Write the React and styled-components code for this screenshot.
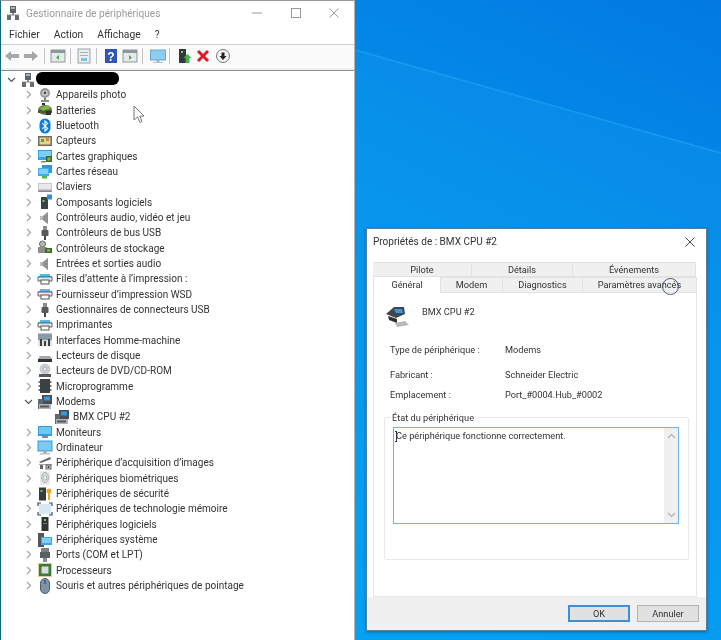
import React from "react";
import styled, { createGlobalStyle } from "styled-components";

const GlobalStyle = createGlobalStyle`
  html, body { margin: 0; padding: 0; background: #0a94ec; }
  body { font-family: Roboto, "Open Sans", sans-serif; overflow: hidden; }
`;

const Desktop = styled.div`
  position: relative;
  width: 721px;
  height: 640px;
  display: flex;
  align-items: flex-start;
  overflow: hidden;
  filter: blur(0.65px);
  background: linear-gradient(205deg, #0279e2 0%, #0490ea 35%, #029df2 70%, #04a3ef 100%);
`;

const Ray = styled.svg`
  position: absolute;
  left: 0;
  top: 0;
  width: 721px;
  height: 640px;
`;

const Manager = styled.section`
  position: relative;
  box-sizing: border-box;
  width: 355px;
  height: 640px;
  flex: none;
  background: #fff;
  border-left: 1px solid #15658a;
  border-right: 1px solid #b4b4b4;
  border-top: 1px solid #9a9a9a;
`;

const TitleBar = styled.div`
  display: flex;
  align-items: center;
  height: 24px;
  padding-left: 4px;
  color: #9b9b9b;
  font-size: 10.15px;
`;

const TitleText = styled.span`
  margin-left: 5px;
`;

const WindowButtons = styled.div`
  margin-left: auto;
  display: flex;
  align-items: center;
  gap: 28.5px;
  padding-right: 15px;
`;

const MenuBar = styled.nav`
  display: flex;
  gap: 14px;
  height: 19px;
  align-items: center;
  padding-left: 8px;
  color: #333;
  font-size: 10.3px;
  border-bottom: 1px solid #cfcfcf;
`;

const ToolBar = styled.div`
  display: flex;
  align-items: center;
  height: 21px;
  padding-left: 3px;
  background: #fafafa;
`;

const ToolIcon = styled.svg`
  width: 16px;
  height: 16px;
  margin-right: ${(p) => p.$gap || 0}px;
  flex: none;
`;

const ToolSep = styled.span`
  width: 1px;
  height: 16px;
  background: #c4c4c4;
  margin: 0 ${(p) => p.$right}px 0 ${(p) => p.$left}px;
  flex: none;
`;

const Divider = styled.div`
  height: 2px;
  margin-top: 2px;
  background: #eeeeee;
  border-bottom: 1px solid #8e8e8e;
`;

const Tree = styled.div`
  padding-top: 1px;
`;

const Row = styled.div`
  display: flex;
  align-items: center;
  height: 15.33px;
  padding-left: ${(p) => 3 + p.$level * 17}px;
  color: #333;
  font-size: 10.03px;
  white-space: nowrap;
`;

const Twist = styled.span`
  display: flex;
  align-items: center;
  justify-content: center;
  width: 14px;
  flex: none;
`;

const RowIcon = styled.svg`
  width: 16px;
  height: 16px;
  margin: 0 3px 0 2px;
  flex: none;
`;

const Redacted = styled.span`
  display: block;
  width: 83px;
  height: 13px;
  margin: -3px 0 0 -3px;
  background: #000;
  border-radius: 6px;
`;

const Pointer = styled.svg`
  position: absolute;
  left: 132px;
  top: 104px;
  width: 12px;
  height: 19px;
`;

const Dialog = styled.section`
  position: relative;
  box-sizing: border-box;
  flex: none;
  width: 341px;
  height: 403px;
  margin: 228px 0 0 11px;
  background: #fff;
  border: 1px solid #5f7f94;
  box-shadow: 0 1px 3px rgba(0, 40, 80, 0.45);
  display: flex;
  flex-direction: column;
  color: #333;
  font-size: 9.2px;
`;

const DialogTitle = styled.div`
  display: flex;
  align-items: center;
  justify-content: space-between;
  height: 25px;
  padding: 0 11px 0 6px;
  font-size: 10px;
  flex: none;
`;

const TabArea = styled.div`
  margin: 8px 9px 0 6px;
  flex: none;
`;

const TabRow = styled.div`
  display: flex;
  height: ${(p) => p.$h}px;
  align-items: flex-end;
`;

const Tab = styled.div`
  box-sizing: border-box;
  width: ${(p) => p.$w}px;
  height: ${(p) => (p.$active ? 17 : p.$back ? 15 : 16)}px;
  flex: none;
  display: flex;
  align-items: center;
  justify-content: center;
  background: ${(p) => (p.$active ? "#fff" : "#f0f0f0")};
  border: 1px solid #e2e2e2;
  border-bottom: ${(p) => (p.$active ? "none" : "1px solid #e2e2e2")};
  border-left: ${(p) => (p.$active ? "1px solid #e2e2e2" : "none")};
  padding-bottom: ${(p) => (p.$back ? 0 : 1)}px;
`;

const Panel = styled.div`
  box-sizing: border-box;
  margin: 0 9px 0 6px;
  height: 304px;
  flex: none;
  background: #fff;
  border: 1px solid #e6e6e6;
  border-top: none;
  padding: 11px 9px 0 10px;
`;

const Head = styled.div`
  display: flex;
  align-items: flex-start;
  gap: 11px;
  padding-left: 1px;
  height: 30px;
`;

const HeadName = styled.span`
  margin-top: 2px;
`;

const Info = styled.div`
  display: grid;
  grid-template-columns: 115px 1fr;
  margin: 9px 0 0 6px;
`;

const InfoCell = styled.span`
  height: ${(p) => p.$h}px;
  line-height: 14px;
`;

const Group = styled.fieldset`
  box-sizing: border-box;
  margin: 10px 0 0 0;
  width: 305px;
  height: 148px;
  padding: 0 9px 0 8px;
  border: 1px solid #e9e9e9;
  border-radius: 2px;
`;

const GroupLabel = styled.legend`
  padding: 0 1px;
  margin-left: -2px;
  font-size: 9.2px;
  line-height: 11px;
`;

const StatusBox = styled.div`
  position: relative;
  box-sizing: border-box;
  width: 286px;
  height: 97px;
  margin-top: 4px;
  border: 1px solid #6fb0e6;
  display: flex;
`;

const StatusText = styled.div`
  flex: 1;
  padding: 1px 0 0 2px;
  line-height: 14px;
`;

const Caret = styled.span`
  position: absolute;
  left: 1px;
  top: 3px;
  width: 2px;
  height: 9px;
  border: solid #334;
  border-width: 1px 0;
  background: linear-gradient(#334, #334) center / 1px 100% no-repeat;
`;

const ScrollTrack = styled.div`
  width: 14px;
  flex: none;
  background: #f0f0f0;
  display: flex;
  flex-direction: column;
  align-items: center;
  justify-content: space-between;
  padding: 5px 0;
`;

const Footer = styled.div`
  flex: 1;
  display: flex;
  justify-content: flex-end;
  align-items: flex-start;
  gap: 7px;
  padding: 8px 7px 0 0;
  background: #f0f0f0;
`;

const Btn = styled.button`
  box-sizing: border-box;
  width: 62px;
  height: 17px;
  padding: 0;
  font: inherit;
  color: #333;
  background: #e1e1e1;
  border: ${(p) => (p.$primary ? "2px solid #3e8fd8" : "1px solid #b4b4b4")};
`;

const TabCursor = styled.span`
  position: absolute;
  left: 295px;
  top: 49px;
  width: 15px;
  height: 15px;
  border: 1px solid #4a5a78;
  border-radius: 50%;
`;

/* Small drawings of the device classes, 16 box */
const icons = {
  computer: (
    <>
      <rect x="5" y="1" width="6" height="7" fill="#5d6368" />
      <rect x="6" y="2" width="4" height="2" fill="#aab2b8" />
      <rect x="7.2" y="8" width="1.6" height="2" fill="#777" />
      <rect x="2" y="10" width="4" height="5" fill="#666c70" />
      <rect x="10" y="10" width="4" height="5" fill="#666c70" />
      <rect x="2" y="9.5" width="12" height="1" fill="#8a8a8a" />
    </>
  ),
  camera: (
    <>
      <circle cx="8" cy="6" r="5" fill="#9a9a9a" />
      <circle cx="8" cy="6" r="2.6" fill="#e2e2e2" />
      <circle cx="8" cy="6" r="1.4" fill="#444" />
      <rect x="7" y="11" width="2" height="2" fill="#777" />
      <rect x="4" y="13" width="8" height="2" fill="#8a8a8a" />
    </>
  ),
  battery: (
    <>
      <ellipse cx="8" cy="8" rx="7" ry="5" fill="#6e7a52" />
      <rect x="1" y="8" width="14" height="3" fill="#4c5a30" />
      <path d="M3 6 L11 3 L13 6 L6 9 Z" fill="#79c13f" />
      <rect x="9" y="9" width="5" height="4" fill="#333" />
      <rect x="5" y="1" width="3" height="2" fill="#333" />
    </>
  ),
  bluetooth: (
    <>
      <rect x="2.5" y="0.5" width="11" height="15" rx="5.5" fill="#0a7ce6" />
      <path d="M5.2 5.2 L10.6 10.4 L8 13 L8 3 L10.6 5.6 L5.2 10.8" fill="none" stroke="#fff" strokeWidth="1.1" />
    </>
  ),
  sensor: (
    <>
      <rect x="1" y="3" width="14" height="10" fill="#6c6c6c" />
      <rect x="2.5" y="4.5" width="11" height="7" fill="#e2d68c" />
      <rect x="4" y="6" width="3" height="3" fill="#5ca04a" />
      <rect x="9" y="5" width="3" height="3" fill="#d88a3c" />
    </>
  ),
  display: (
    <>
      <rect x="1" y="2" width="14" height="10" fill="#36a3e4" />
      <rect x="2" y="3" width="12" height="6" fill="#7fcdf3" />
      <rect x="9" y="8" width="6" height="6" fill="#3c6e32" />
      <rect x="10.5" y="9.5" width="3" height="3" fill="#78b850" />
      <rect x="4" y="13" width="5" height="1.5" fill="#888" />
    </>
  ),
  network: (
    <>
      <rect x="5" y="1" width="10" height="8" fill="#2f97dc" />
      <rect x="1" y="4" width="11" height="8" fill="#42ade8" />
      <rect x="2" y="5" width="9" height="5" fill="#7ed0f5" />
      <rect x="5" y="12" width="5" height="2.5" fill="#4fb848" />
    </>
  ),
  keyboard: (
    <>
      <rect x="1" y="4" width="14" height="9" fill="#c8c8cc" />
      <rect x="2" y="5" width="12" height="5" fill="#e8e8ea" />
      <rect x="1" y="11.5" width="14" height="1.5" fill="#8a8a8e" />
    </>
  ),
  component: (
    <>
      <rect x="4" y="3" width="7" height="12" fill="#3d4246" />
      <rect x="5.5" y="6" width="2" height="2" fill="#5fd35f" />
      <rect x="10" y="0.5" width="5" height="5" fill="#2f8fe0" />
    </>
  ),
  audio: (
    <>
      <path d="M3 6 H6 L11 2 V14 L6 10 H3 Z" fill="#b9b9b9" />
      <path d="M11 2 V14 L6 10 V6 Z" fill="#8f9193" />
    </>
  ),
  usb: (
    <>
      <rect x="6" y="1" width="4" height="4" fill="#8c8c8c" />
      <rect x="4.5" y="5" width="7" height="6" rx="1" fill="#55595c" />
      <rect x="7" y="11" width="2" height="4" fill="#444" />
    </>
  ),
  storage: (
    <>
      <circle cx="5.5" cy="4" r="3" fill="#b8b8b0" stroke="#666" />
      <rect x="1" y="7" width="9" height="6" fill="#8e8e88" />
      <rect x="8" y="8" width="7" height="5" fill="#446a2c" />
      <rect x="10" y="9.5" width="3" height="2" fill="#8ac04e" />
    </>
  ),
  printer: (
    <>
      <rect x="3" y="3" width="10" height="2" fill="#5fb7e0" />
      <path d="M1 6 H15 V10 H1 Z" fill="#e4e8ea" stroke="#666" strokeWidth="1" />
      <rect x="4" y="9" width="8" height="4" fill="#fff" stroke="#555" strokeWidth="1" />
      <rect x="1" y="5" width="14" height="1" fill="#2f8fc6" />
    </>
  ),
  hid: (
    <>
      <rect x="1" y="1.5" width="14" height="7" fill="#8a9aa4" />
      <rect x="1" y="8.5" width="14" height="6" fill="#dfe3e6" />
      <rect x="3" y="7" width="2" height="7" fill="#394147" />
      <rect x="7" y="9" width="2" height="5" fill="#394147" />
      <rect x="11" y="7" width="2" height="7" fill="#394147" />
    </>
  ),
  disk: (
    <>
      <path d="M3 8 H13 L15 11 H1 Z" fill="#a8a8a8" />
      <rect x="1" y="11" width="14" height="3" fill="#2f3336" />
    </>
  ),
  dvd: (
    <>
      <circle cx="8" cy="6" r="5.5" fill="#c8ccd0" />
      <circle cx="8" cy="6" r="1.5" fill="#fff" stroke="#888" strokeWidth="0.5" />
      <rect x="2" y="11" width="12" height="3" fill="#55595c" />
    </>
  ),
  firmware: (
    <>
      <rect x="3" y="1" width="10" height="14" fill="#3e4144" />
      <rect x="1.5" y="3" width="1.5" height="2" fill="#777" />
      <rect x="1.5" y="7" width="1.5" height="2" fill="#777" />
      <rect x="1.5" y="11" width="1.5" height="2" fill="#777" />
      <rect x="13" y="3" width="1.5" height="2" fill="#777" />
      <rect x="13" y="7" width="1.5" height="2" fill="#777" />
      <rect x="13" y="11" width="1.5" height="2" fill="#777" />
    </>
  ),
  modem: (
    <>
      <rect x="5" y="1" width="10" height="9" fill="#4a4e52" />
      <rect x="7" y="2.5" width="6" height="4" fill="#2f9be0" />
      <rect x="1" y="5" width="5" height="10" fill="#62676b" />
      <rect x="2" y="10" width="12" height="5" fill="#b0b4b8" />
      <rect x="3" y="11.5" width="9" height="2" fill="#55595c" />
    </>
  ),
  monitor: (
    <>
      <rect x="1" y="2" width="14" height="10" fill="#2f9be0" />
      <rect x="2" y="3" width="12" height="7" fill="#6cc8f4" />
      <rect x="5" y="12" width="6" height="2" fill="#8a8a8a" />
    </>
  ),
  pc: (
    <>
      <rect x="1" y="1" width="14" height="10" fill="#7ccaf2" stroke="#3b9bd6" />
      <rect x="6" y="11" width="4" height="2" fill="#b0b0b0" />
      <rect x="3" y="13" width="10" height="1.5" fill="#c4c4c4" />
    </>
  ),
  imaging: (
    <>
      <path d="M2 7 L13 2 L14 4 L4 8 Z" fill="#666" />
      <rect x="2" y="9" width="13" height="1" fill="#a8a8a8" />
      <rect x="3" y="10" width="3" height="4" fill="#666" />
      <rect x="9" y="10" width="5" height="4" fill="#d4d8da" stroke="#444" strokeWidth="0.8" />
      <circle cx="11.5" cy="12" r="1" fill="#333" />
    </>
  ),
  biometric: (
    <>
      <rect x="3" y="1" width="10" height="14" rx="1" fill="#e8ece8" />
      <ellipse cx="8" cy="7.5" rx="3.3" ry="5" fill="none" stroke="#7a7f7a" strokeWidth="1" strokeDasharray="1 0.6" />
      <ellipse cx="8" cy="7.5" rx="1.6" ry="3" fill="none" stroke="#8a8f8a" strokeWidth="1" strokeDasharray="1 0.6" />
    </>
  ),
  security: (
    <>
      <rect x="2" y="1.5" width="7" height="13" fill="#363a3c" />
      <rect x="3.5" y="4" width="2" height="2" fill="#58d058" />
      <circle cx="12" cy="5" r="2.6" fill="#eaa928" />
      <rect x="11" y="6" width="2" height="8" fill="#eaa928" />
    </>
  ),
  memory: (
    <>
      <rect x="2" y="3" width="12" height="10" fill="#d6e8f4" />
      <path d="M1 5 V2 H4 M12 2 H15 V5 M15 11 V14 H12 M4 14 H1 V11" fill="none" stroke="#44494d" strokeWidth="1.2" />
    </>
  ),
  software: (
    <>
      <rect x="4.5" y="1" width="7" height="14" fill="#2f3335" />
      <rect x="7" y="3" width="2" height="2" fill="#62d862" />
      <rect x="6" y="7" width="4" height="1" fill="#777" />
    </>
  ),
  system: (
    <>
      <rect x="1" y="1" width="6" height="14" fill="#50565a" />
      <rect x="4" y="5" width="11" height="8" fill="#38a8e8" />
      <rect x="5" y="6" width="9" height="5" fill="#7dd0f6" />
    </>
  ),
  ports: (
    <>
      <rect x="4" y="1" width="8" height="4" fill="#7c7f82" />
      <rect x="3" y="5" width="10" height="6" fill="#5b5f62" />
      <rect x="6" y="11" width="4" height="4" fill="#8a8d90" />
    </>
  ),
  cpu: (
    <>
      <rect x="1" y="1" width="14" height="14" fill="#d7cf9f" />
      <rect x="2" y="2" width="12" height="12" fill="#3d7a3d" />
      <rect x="4.5" y="4.5" width="7" height="7" fill="#dcdcdc" />
    </>
  ),
  mouse: (
    <>
      <rect x="3.5" y="0.5" width="9" height="15" rx="4.5" fill="#7f93a8" stroke="#4f5e6e" />
      <rect x="7.5" y="2" width="1" height="4" fill="#2f3a44" />
    </>
  ),
};

const rows = [
  ["Appareils photo", "camera"],
  ["Batteries", "battery"],
  ["Bluetooth", "bluetooth"],
  ["Capteurs", "sensor"],
  ["Cartes graphiques", "display"],
  ["Cartes réseau", "network"],
  ["Claviers", "keyboard"],
  ["Composants logiciels", "component"],
  ["Contrôleurs audio, vidéo et jeu", "audio"],
  ["Contrôleurs de bus USB", "usb"],
  ["Contrôleurs de stockage", "storage"],
  ["Entrées et sorties audio", "audio"],
  ["Files d’attente à l’impression :", "printer"],
  ["Fournisseur d’impression WSD", "printer"],
  ["Gestionnaires de connecteurs USB", "usb"],
  ["Imprimantes", "printer"],
  ["Interfaces Homme-machine", "hid"],
  ["Lecteurs de disque", "disk"],
  ["Lecteurs de DVD/CD-ROM", "dvd"],
  ["Microprogramme", "firmware"],
  ["Modems", "modem", "open"],
  ["BMX CPU #2", "modem", "child"],
  ["Moniteurs", "monitor"],
  ["Ordinateur", "pc"],
  ["Périphérique d’acquisition d’images", "imaging"],
  ["Périphériques biométriques", "biometric"],
  ["Périphériques de sécurité", "security"],
  ["Périphériques de technologie mémoire", "memory"],
  ["Périphériques logiciels", "software"],
  ["Périphériques système", "system"],
  ["Ports (COM et LPT)", "ports"],
  ["Processeurs", "cpu"],
  ["Souris et autres périphériques de pointage", "mouse"],
];

function Chevron({ open }) {
  return (
    <svg width="9" height="9" viewBox="0 0 9 9">
      <path
        d={open ? "M1 3 L4.5 6.5 L8 3" : "M3 1 L6.5 4.5 L3 8"}
        fill="none"
        stroke={open ? "#555" : "#a6a6a6"}
        strokeWidth="1.2"
      />
    </svg>
  );
}

function DeviceIcon({ name }) {
  return <RowIcon viewBox="0 0 16 16">{icons[name]}</RowIcon>;
}

function DeviceTree() {
  return (
    <Tree>
      <Row $level={0}>
        <Twist>
          <Chevron open />
        </Twist>
        <DeviceIcon name="computer" />
        <Redacted />
      </Row>
      {rows.map(([label, icon, kind]) => (
        <Row key={label} $level={kind === "child" ? 2 : 1}>
          <Twist>{kind !== "child" && <Chevron open={kind === "open"} />}</Twist>
          <DeviceIcon name={icon} />
          {label}
        </Row>
      ))}
    </Tree>
  );
}

function Toolbar() {
  return (
    <ToolBar>
      <ToolIcon viewBox="0 0 16 16" $gap={3}>
        <path d="M1 8 L7 3 V6 H15 V10 H7 V13 Z" fill="#a3a8a8" />
      </ToolIcon>
      <ToolIcon viewBox="0 0 16 16">
        <path d="M15 8 L9 3 V6 H1 V10 H9 V13 Z" fill="#a3a8a8" />
      </ToolIcon>
      <ToolSep $left={5} $right={5} />
      <ToolIcon viewBox="0 0 16 16">
        <rect x="1" y="2" width="14" height="12" fill="#e6eaea" stroke="#8d979d" />
        <rect x="1" y="2" width="14" height="3" fill="#8d979d" />
        <path d="M9 7 L6 9.5 L9 12 Z" fill="#4cb050" />
      </ToolIcon>
      <ToolSep $left={4} $right={5} />
      <ToolIcon viewBox="0 0 16 16">
        <rect x="2" y="1" width="12" height="14" fill="#eceff0" stroke="#98a2a8" />
        <rect x="4" y="4" width="8" height="1" fill="#a8b0b4" />
        <rect x="4" y="7" width="8" height="1" fill="#a8b0b4" />
        <rect x="5" y="10" width="6" height="3" fill="#7cc4ea" />
      </ToolIcon>
      <ToolSep $left={4} $right={6} />
      <ToolIcon viewBox="0 0 16 16" $gap={3}>
        <rect x="2" y="1" width="12" height="14" fill="#2f55b8" />
        <text x="8" y="12.5" textAnchor="middle" fontSize="12" fontWeight="700" fill="#fff" fontFamily="Liberation Sans">?</text>
      </ToolIcon>
      <ToolIcon viewBox="0 0 16 16">
        <rect x="1" y="2" width="14" height="12" fill="#e6eaea" stroke="#8d979d" />
        <rect x="1" y="2" width="14" height="3" fill="#8d979d" />
        <path d="M7 7 L10 9.5 L7 12 Z" fill="#4cb050" />
      </ToolIcon>
      <ToolSep $left={4} $right={6.5} />
      <ToolIcon viewBox="0 0 16 16">
        <rect x="0.5" y="2" width="15" height="10" fill="#8dcdf0" stroke="#6aa9cf" />
        <rect x="6.5" y="12" width="3" height="2" fill="#9fb2bd" />
        <rect x="3" y="14" width="10" height="1" fill="#b6c2c9" />
      </ToolIcon>
      <ToolSep $left={3.5} $right={6} />
      <ToolIcon viewBox="0 0 16 16" $gap={3}>
        <rect x="3" y="1" width="7" height="14" fill="#333739" />
        <rect x="5" y="3" width="2" height="2" fill="#6ad46a" />
        <path d="M11.5 6 L15.5 10 H13.5 V15 H9.5 V10 H7.5 Z" fill="#3fb54a" />
      </ToolIcon>
      <ToolIcon viewBox="0 0 16 16" $gap={3.5}>
        <path d="M3 3 L13 13 M13 3 L3 13" stroke="#de1c24" strokeWidth="3" />
      </ToolIcon>
      <ToolIcon viewBox="0 0 16 16">
        <circle cx="8" cy="8" r="6.5" fill="#f4f4f4" stroke="#777" />
        <path d="M8 12 L4.5 8 H6.5 V4.5 H9.5 V8 H11.5 Z" fill="#222" />
      </ToolIcon>
    </ToolBar>
  );
}

function DeviceManager() {
  return (
    <Manager>
      <TitleBar>
        <svg width="16" height="16" viewBox="0 0 16 16">{icons.computer}</svg>
        <TitleText>Gestionnaire de périphériques</TitleText>
        <WindowButtons>
          <svg width="10" height="10" viewBox="0 0 10 10">
            <path d="M0 5 H10" stroke="#9a9a9a" />
          </svg>
          <svg width="10" height="10" viewBox="0 0 10 10">
            <rect x="0.5" y="0.5" width="9" height="9" fill="none" stroke="#9a9a9a" />
          </svg>
          <svg width="10" height="10" viewBox="0 0 10 10">
            <path d="M0.5 0.5 L9.5 9.5 M9.5 0.5 L0.5 9.5" stroke="#9a9a9a" />
          </svg>
        </WindowButtons>
      </TitleBar>
      <MenuBar>
        <span>Fichier</span>
        <span>Action</span>
        <span>Affichage</span>
        <span>?</span>
      </MenuBar>
      <Toolbar />
      <Divider />
      <DeviceTree />
      <Pointer viewBox="0 0 12 19">
        <path d="M1 1 V15 L4.5 12 L7 17.5 L9 16.5 L6.8 11.2 L11 11 Z" fill="#fff" stroke="#777" />
      </Pointer>
    </Manager>
  );
}

function PropertiesDialog() {
  return (
    <Dialog>
      <DialogTitle>
        <span>Propriétés de : BMX CPU #2</span>
        <svg width="10" height="10" viewBox="0 0 10 10">
          <path d="M0.5 0.5 L9.5 9.5 M9.5 0.5 L0.5 9.5" stroke="#444" />
        </svg>
      </DialogTitle>
      <TabArea>
        <TabRow $h={15}>
          <Tab $w={99} $back>Pilote</Tab>
          <Tab $w={101} $back>Détails</Tab>
          <Tab $w={123} $back>Événements</Tab>
        </TabRow>
        <TabRow $h={16}>
          <Tab $w={68} $active>Général</Tab>
          <Tab $w={62}>Modem</Tab>
          <Tab $w={80}>Diagnostics</Tab>
          <Tab $w={114}>Paramètres avancés</Tab>
        </TabRow>
      </TabArea>
      <TabCursor />
      <Panel>
        <Head>
          <svg width="26" height="24" viewBox="0 0 26 24">
            <path d="M1 10 L9 3 H19 L20 10 L11 14 Z" fill="#41464a" />
            <path d="M9 5 L17 5 L18 9 L11 9 Z" fill="#2f9be0" />
            <path d="M3 12 L12 15 V19 L4 16 Z" fill="#2e3236" />
            <path d="M10 19 L20 17 L24 21 L12 23 Z" fill="#b5b9bc" />
          </svg>
          <HeadName>BMX CPU #2</HeadName>
        </Head>
        <Info>
          <InfoCell $h={25}>Type de périphérique :</InfoCell>
          <InfoCell $h={25}>Modems</InfoCell>
          <InfoCell $h={19.5}>Fabricant :</InfoCell>
          <InfoCell $h={19.5}>Schneider Electric</InfoCell>
          <InfoCell $h={14}>Emplacement :</InfoCell>
          <InfoCell $h={14}>Port_#0004.Hub_#0002</InfoCell>
        </Info>
        <Group>
          <GroupLabel>État du périphérique</GroupLabel>
          <StatusBox>
            <Caret />
            <StatusText>Ce périphérique fonctionne correctement.</StatusText>
            <ScrollTrack>
              <svg width="9" height="6" viewBox="0 0 9 6">
                <path d="M1 5 L4.5 1.5 L8 5" fill="none" stroke="#b0b0b0" strokeWidth="1.2" />
              </svg>
              <svg width="9" height="6" viewBox="0 0 9 6">
                <path d="M1 1 L4.5 4.5 L8 1" fill="none" stroke="#b0b0b0" strokeWidth="1.2" />
              </svg>
            </ScrollTrack>
          </StatusBox>
        </Group>
      </Panel>
      <Footer>
        <Btn $primary>OK</Btn>
        <Btn>Annuler</Btn>
      </Footer>
    </Dialog>
  );
}

export default function App() {
  return (
    <>
      <GlobalStyle />
      <Desktop>
        <Ray viewBox="0 0 721 640">
          <polygon points="355,50 721,153 721,640 355,640" fill="#18a6f6" opacity="0.2" />
          <line x1="355" y1="50" x2="721" y2="153" stroke="#22a3f6" strokeWidth="1.5" opacity="0.7" />
        </Ray>
        <DeviceManager />
        <PropertiesDialog />
      </Desktop>
    </>
  );
}
